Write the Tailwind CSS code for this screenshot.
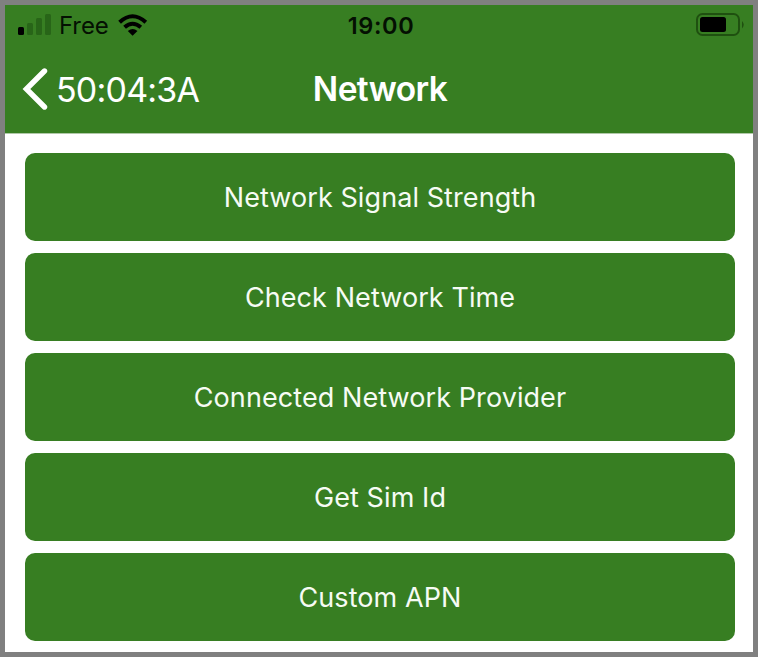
<!DOCTYPE html>
<html lang="en"><head><meta charset="utf-8"><title>Network</title>
<script src="https://cdn.jsdelivr.net/npm/@tailwindcss/browser@4"></script></head>
<body class="h-[657px] w-[758px] overflow-hidden font-['Inter',sans-serif]">
<div class="flex h-[657px] w-[758px] flex-col border-[5px] border-[#808080] bg-white">
<header class="h-[129px] border-b border-[#b0c8a8] bg-[#377e22]">
<div class="grid h-[42px] grid-cols-3 items-center pr-[9px] pl-[13px] text-[24px] text-[#041002]">
<div class="flex items-center">
<svg class="-mt-[2px] h-[22px] w-[34px]" viewBox="0 0 34 22"><rect y="13" width="6" height="8" rx="1.5" fill="#000"/><g fill="#286518"><rect x="9" y="9" width="6" height="12" rx="1.5"/><rect x="18" y="4" width="6" height="17" rx="1.5"/><rect x="27" width="6" height="21" rx="1.5"/></g></svg>
<span class="ml-[7px] tracking-[-0.1px]">Free</span>
<svg class="-mt-[3px] ml-[9px] h-[24px] w-[30px]" viewBox="0 0 30 24" fill="none" stroke="#000" stroke-width="4"><path d="M1.6 9.2Q14.5-2.7 27.8 9.2M6.6 14.3Q14.5 7.2 22.8 14.3"/><path d="M14.6 22.8l-4.8-4.9q4.9-3.8 9.7 0z" fill="#000" stroke="none"/></svg>
</div>
<div class="text-center text-[23.5px] font-semibold tracking-[0.6px]">19:00</div>
<svg class="-mt-[3px] h-[24px] w-[48px] justify-self-end" viewBox="0 0 48 24"><rect x="1" y="1" width="42" height="21" rx="5.5" fill="none" stroke="#1f5010" stroke-width="2"/><rect x="4" y="4" width="26" height="15" rx="2.5" fill="#000"/><path d="M46 8q3.5 3.8 0 7.5z" fill="#1f5010"/></svg>
</div>
<div class="grid h-[84px] grid-cols-3 items-center px-[17px] text-[34px] text-white">
<div class="flex items-center gap-[8px]"><svg class="h-[42px] w-[26px] shrink-0" viewBox="0 0 26 42" fill="none" stroke="#fff" stroke-width="5.4" stroke-linecap="round" stroke-linejoin="miter"><path d="M22.5 3L4.4 21l18.1 18"/></svg><span class="tracking-[-0.8px]">50:04:3A</span></div>
<h1 class="pl-[2px] text-center text-[33.5px] font-semibold tracking-[-0.6px]">Network</h1>
</div>
</header>
<main class="flex flex-col gap-3 pt-[19px] pr-[18px] pl-[20px] text-[27px] tracking-[0.08px] text-[#f6fbf4]">
<button class="h-[88px] rounded-[10px] bg-[#377e22] pt-[2px]">Network Signal Strength</button>
<button class="h-[88px] rounded-[10px] bg-[#377e22] pt-[2px]">Check Network Time</button>
<button class="h-[88px] rounded-[10px] bg-[#377e22] pt-[2px]">Connected Network Provider</button>
<button class="h-[88px] rounded-[10px] bg-[#377e22] pt-[2px]">Get Sim Id</button>
<button class="h-[88px] rounded-[10px] bg-[#377e22] pt-[2px]">Custom APN</button>
</main></div></body></html>
